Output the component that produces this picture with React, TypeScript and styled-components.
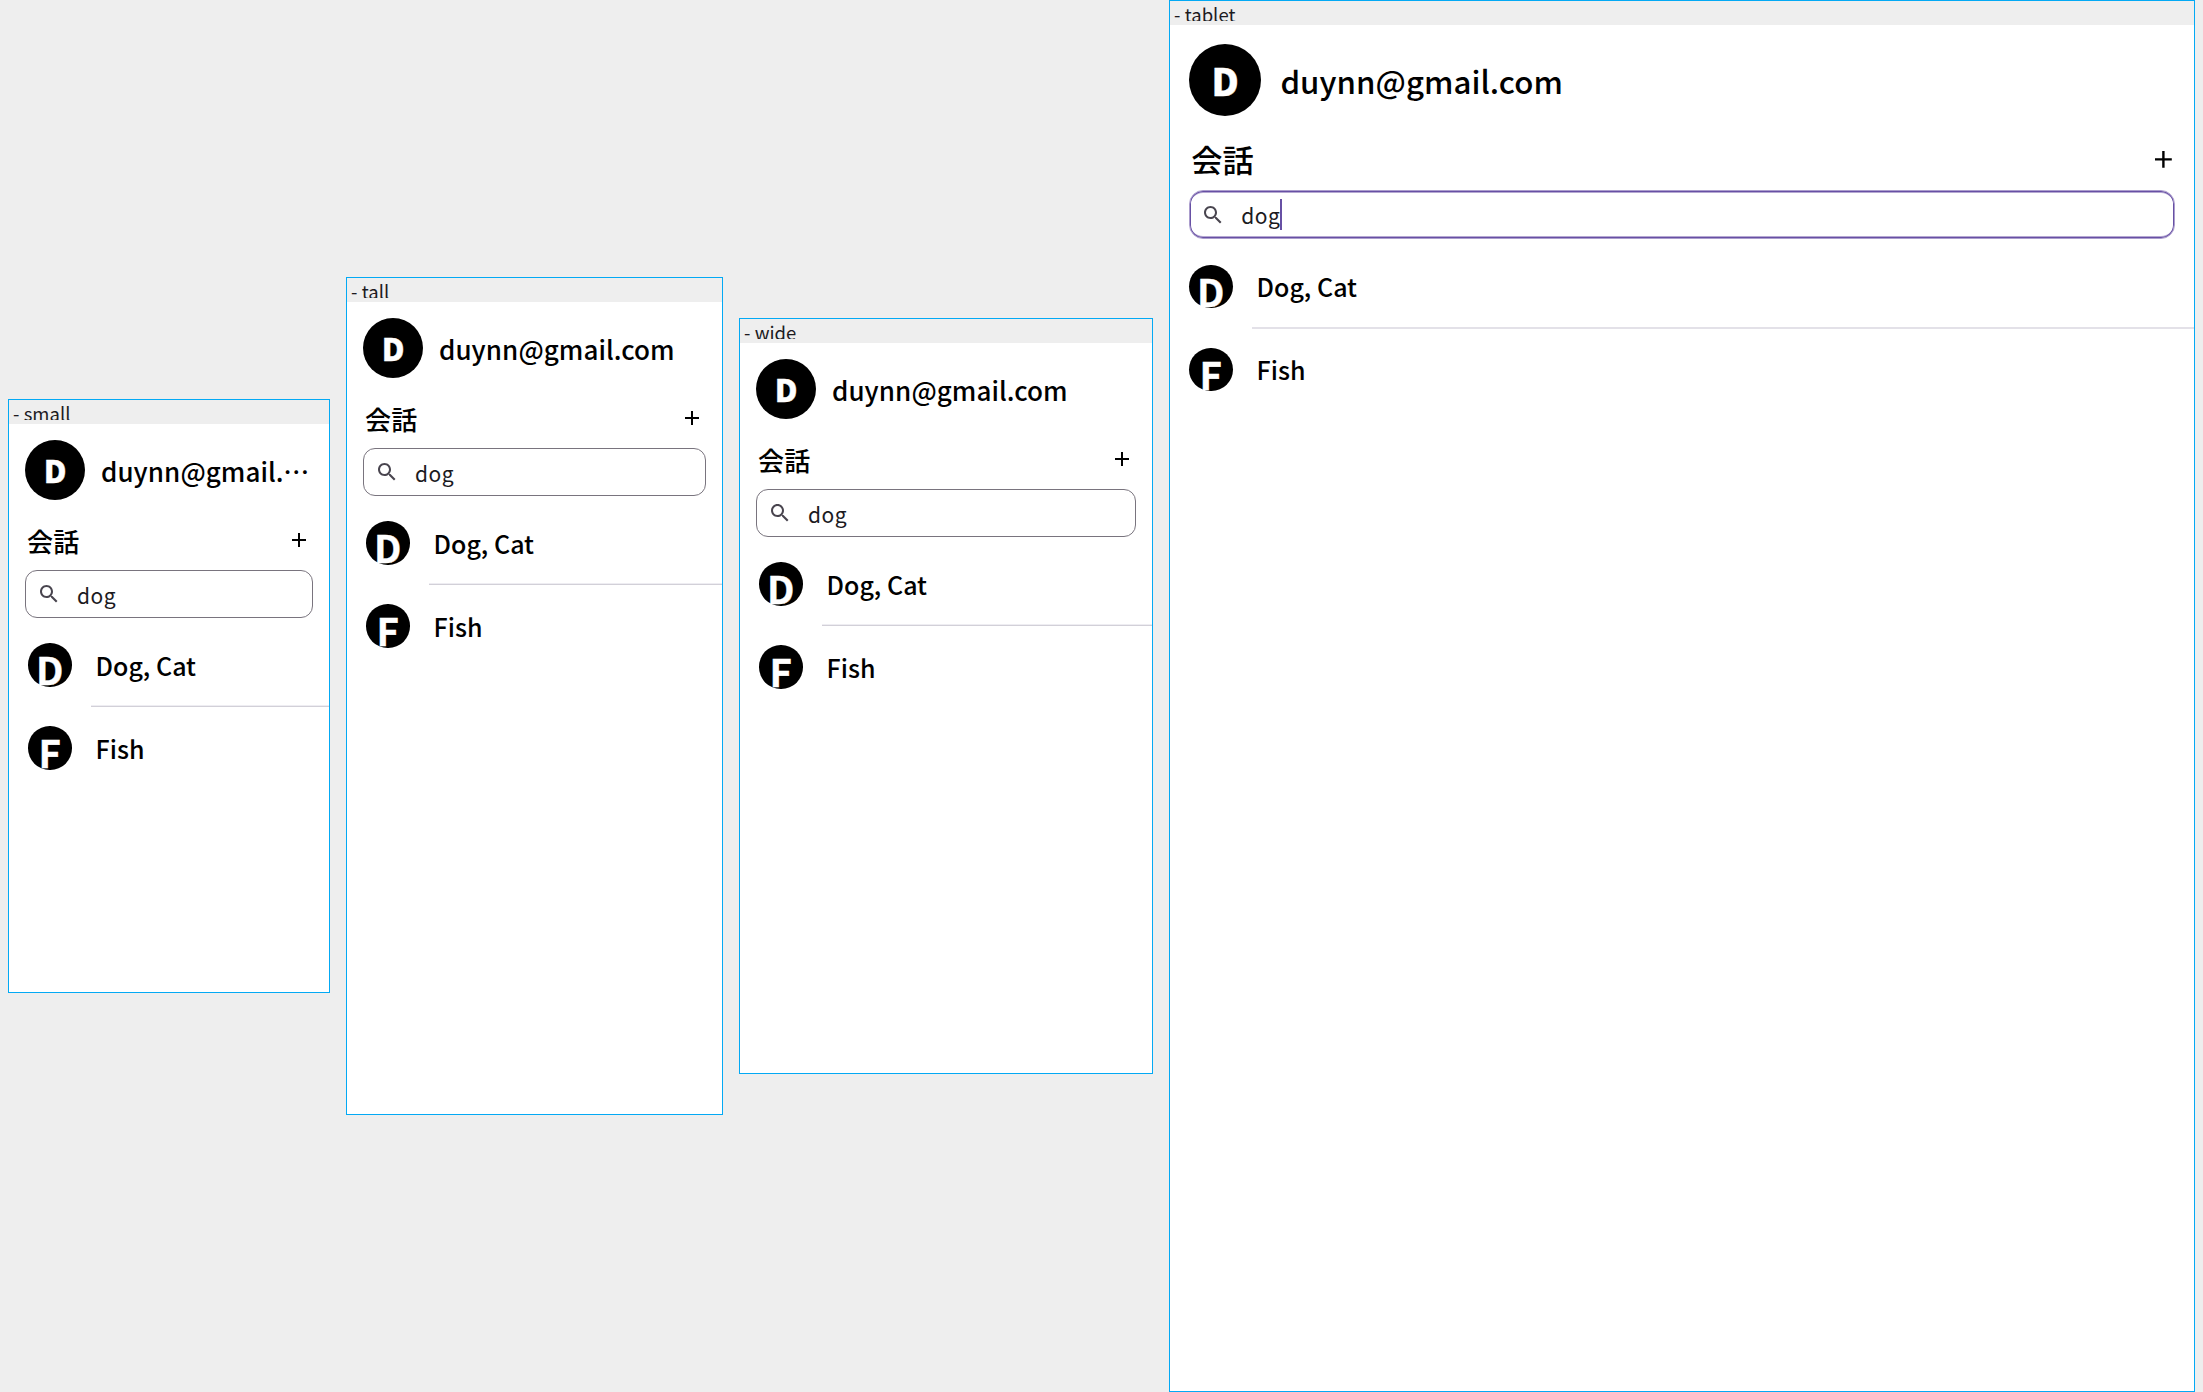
import React from "react";
import styled, { createGlobalStyle, css } from "styled-components";

const GlobalStyle = createGlobalStyle`
  *, *::before, *::after { box-sizing: border-box; }
  html, body { margin: 0; background: #eeeeee; }
  body {
    font-family: "Noto Sans CJK JP", "Noto Sans", sans-serif;
    color: #000;
  }
`;

const Board = styled.main`
  display: flex;
  align-items: center;
  gap: 16px;
  width: 2203px;
  height: 1392px;
  padding: 0 8px;
  background: #eeeeee;
`;

const Frame = styled.section<{ $width: number; $height: number }>`
  flex: none;
  display: flex;
  flex-direction: column;
  width: ${(p) => p.$width + 2}px;
  height: ${(p) => p.$height + 2}px;
  border: 1px solid #03a9f4;
  background: #fff;
  overflow: hidden;
`;

const FrameLabel = styled.header`
  flex: none;
  height: 24px;
  padding: 4px;
  background: #eeeeee;
`;

const FrameName = styled.div`
  height: 16px;
  overflow: hidden;
  font-size: 18.5px;
  line-height: 18px;
  letter-spacing: 0.03px;
  color: #1c1b1f;
  white-space: nowrap;
`;

const Screen = styled.div<{ $scale: number }>`
  --unit: ${(p) => p.$scale};
  flex: 1;
  display: flex;
  flex-direction: column;
  padding-top: calc(16px * var(--unit));
`;

const Profile = styled.div`
  display: flex;
  align-items: center;
  gap: calc(16px * var(--unit));
  padding: 0 calc(16px * var(--unit));
`;

const ProfileAvatar = styled.div`
  flex: none;
  display: flex;
  align-items: center;
  justify-content: center;
  width: calc(60px * var(--unit));
  height: calc(60px * var(--unit));
  border-radius: 50%;
  background: #000;
  color: #fff;
  font-size: calc(31.2px * var(--unit));
  font-weight: 900;
  line-height: 1.448;
  -webkit-text-stroke: 0.4px #fff;
`;

const Email = styled.div`
  min-width: 0;
  padding-top: 1px;
  overflow: hidden;
  text-overflow: ellipsis;
  white-space: nowrap;
  font-size: calc(26px * var(--unit));
  font-weight: 500;
  line-height: 1.448;
  letter-spacing: 0.06px;
`;

const TitleRow = styled.div`
  display: flex;
  align-items: center;
  justify-content: space-between;
  height: 48px;
  margin-top: calc(16px * var(--unit));
  padding: 0 calc(16px * var(--unit)) 0 calc(16px * var(--unit) + 2px);
`;

const Title = styled.h1<{ $large: boolean }>`
  margin: 0;
  padding-top: ${(p) => (p.$large ? 0 : 1)}px;
  padding-bottom: ${(p) => (p.$large ? 1 : 0)}px;
  font-size: calc(26px * var(--unit));
  font-weight: 500;
  line-height: 1.448;
  letter-spacing: 0.14px;
`;

const AddButton = styled.button<{ $large: boolean }>`
  display: flex;
  align-items: center;
  justify-content: center;
  width: ${(p) => (p.$large ? 23 : 28)}px;
  height: 48px;
  padding: 0;
  border: 0;
  background: none;
  color: #000;

  svg {
    flex: none;
    width: calc(24px * var(--unit));
    height: calc(24px * var(--unit));
    fill: currentColor;
  }
`;

const SearchField = styled.div<{ $focused: boolean }>`
  display: flex;
  align-items: center;
  height: 48px;
  margin: 6px calc(16px * var(--unit)) 0;
  padding-left: 12px;
  border: 1px solid #79747e;
  border-radius: 12px;

  svg {
    flex: none;
    width: 24px;
    height: 24px;
    margin-left: -1.4px;
    fill: #49454f;
  }

  ${(p) =>
    p.$focused &&
    css`
      height: 49px;
      margin-top: 6.6px;
      border-color: #ab9dcd;
      border-radius: 14px;
      box-shadow: inset 0 0 0 1px #6750a4, inset 0 2px 0 #b5a8d2,
        inset 0 -2px 0 #b5a8d2;

      svg {
        margin-top: 1px;
      }
    `}
`;

const SearchText = styled.span`
  margin-left: 16.4px;
  padding-top: 2px;
  font-size: 21px;
  line-height: 1.448;
  letter-spacing: 0.5px;
  color: #1c1b1f;
`;

const Caret = styled.span`
  width: 2px;
  height: 31px;
  margin-left: -0.3px;
  background: #6750a4;
`;

const List = styled.ul<{ $large: boolean }>`
  --row: ${(p) => (p.$large ? 81.8 : 82)}px;
  --drop: ${(p) => (p.$large ? 9 : 8)}px;
  margin: ${(p) => (p.$large ? 6.65 : 6)}px 0 0;
  padding: 0;
  list-style: none;
`;

const Row = styled.li`
  display: flex;
  align-items: center;
  height: var(--row);
  padding-left: 19px;
`;

const RowAvatar = styled.div`
  flex: none;
  display: flex;
  align-items: center;
  justify-content: center;
  width: 43.5px;
  height: 43.5px;
  padding-top: var(--drop);
  border-radius: 50%;
  background: #000;
  color: #fff;
  font-size: 38.4px;
  font-weight: 700;
  line-height: 1.448;
  -webkit-text-stroke: 0.4px #fff;
`;

const RowName = styled.div`
  margin-left: 24px;
  font-size: 25px;
  font-weight: 500;
  line-height: 1.448;
  letter-spacing: 0.02px;
`;

const Divider = styled.li<{ $soft: boolean }>`
  height: 2px;
  margin: ${(p) => (p.$soft ? "0 0 -1px 82px" : "-1px 0 0 82px")};
  border-top: 1px solid ${(p) => (p.$soft ? "#e3e1e8" : "#eeedf2")};
  border-bottom: 1px solid ${(p) => (p.$soft ? "#e3e1e8" : "#d2d0d8")};
`;

const PlusIcon = () => (
  <svg viewBox="0 0 24 24" aria-hidden="true">
    <path d="M19 13h-6v6h-2v-6H5v-2h6V5h2v6h6v2z" />
  </svg>
);

const SearchIcon = () => (
  <svg viewBox="0 0 24 24" aria-hidden="true">
    <path d="M15.5 14h-.79l-.28-.27C15.41 12.59 16 11.11 16 9.5 16 5.91 13.09 3 9.5 3S3 5.91 3 9.5 5.91 16 9.5 16c1.61 0 3.09-.59 4.23-1.57l.27.28v.79l5 4.99L20.49 19l-4.99-5zm-6 0C7.01 14 5 11.99 5 9.5S7.01 5 9.5 5 14 7.01 14 9.5 11.99 14 9.5 14z" />
  </svg>
);

type Device = {
  name: string;
  width: number;
  height: number;
  scale: number;
  focused?: boolean;
};

const devices: Device[] = [
  { name: "small", width: 320, height: 592, scale: 1 },
  { name: "tall", width: 375, height: 836, scale: 1 },
  { name: "wide", width: 412, height: 754, scale: 1 },
  { name: "tablet", width: 1024, height: 1390, scale: 1.2, focused: true },
];

const conversations = ["Dog, Cat", "Fish"];

const DeviceFrame = ({ name, width, height, scale, focused = false }: Device) => {
  const large = scale > 1;
  return (
    <Frame $width={width} $height={height}>
      <FrameLabel>
        <FrameName>- {name}</FrameName>
      </FrameLabel>
      <Screen $scale={scale}>
        <Profile>
          <ProfileAvatar>D</ProfileAvatar>
          <Email>duynn@gmail.com</Email>
        </Profile>
        <TitleRow>
          <Title $large={large}>会話</Title>
          <AddButton $large={large}>
            <PlusIcon />
          </AddButton>
        </TitleRow>
        <SearchField $focused={focused}>
          <SearchIcon />
          <SearchText>dog</SearchText>
          {focused && <Caret />}
        </SearchField>
        <List $large={large}>
          {conversations.map((title, i) => (
            <React.Fragment key={title}>
              {i > 0 && <Divider $soft={large} />}
              <Row>
                <RowAvatar>{title[0]}</RowAvatar>
                <RowName>{title}</RowName>
              </Row>
            </React.Fragment>
          ))}
        </List>
      </Screen>
    </Frame>
  );
};

export default function App() {
  return (
    <>
      <GlobalStyle />
      <Board lang="ja">
        {devices.map((d) => (
          <DeviceFrame key={d.name} {...d} />
        ))}
      </Board>
    </>
  );
}
